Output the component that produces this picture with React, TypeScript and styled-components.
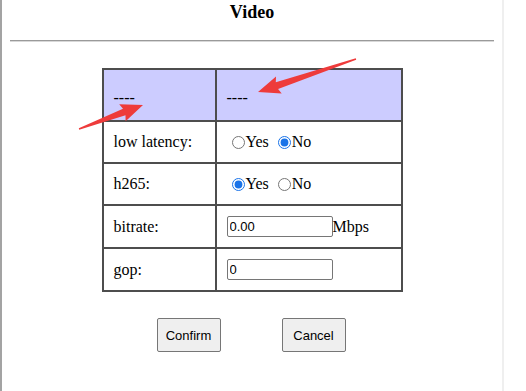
import React from "react";
import styled, { createGlobalStyle } from "styled-components";

const Global = createGlobalStyle`
  html, body { margin: 0; padding: 0; background: #fff; }
  body { font-family: "Liberation Serif", "Times New Roman", serif; color: #000; }
`;

const Page = styled.div`
  position: relative;
  box-sizing: border-box;
  width: 504px;
  height: 391px;
  border-left: 2px solid #a3a3a3;
  border-right: 2px solid #efefef;
  padding: 0 8px;
  display: flex;
  flex-direction: column;
  align-items: stretch;
`;

const Title = styled.h3`
  margin: 2px 0 0;
  font-size: 18px;
  line-height: 20px;
  font-weight: bold;
  text-align: center;
`;

const Rule = styled.hr`
  margin: 18px 0 0;
  border: none;
  border-top: 1px solid #9a9a9a;
  border-bottom: 1px solid #d8d8d8;
  height: 0;
`;

const Table = styled.table`
  margin: 26px auto 0;
  border-collapse: collapse;
  border: 2px solid #4d4d4d;
  font-size: 16px;
`;

const Row = styled.tr<{ $head?: boolean; $h: number }>`
  height: ${(p) => p.$h}px;
  background: ${(p) => (p.$head ? "#ccccff" : "#fff")};
`;

const Cell = styled.td<{ $w: number; $head?: boolean }>`
  width: ${(p) => p.$w}px;
  box-sizing: border-box;
  border: 2px solid #4d4d4d;
  padding: ${(p) => (p.$head ? "6px 10px 0" : "0 10px")};
  vertical-align: middle;
  white-space: nowrap;
`;

const Radio = styled.input.attrs({ type: "radio" })`
  margin: 0 1px 0 5px;
  width: 13px;
  height: 13px;
  vertical-align: -2px;
  accent-color: #1a73e8;
`;

const Field = styled.input`
  box-sizing: border-box;
  width: 106px;
  height: 21px;
  margin: 0;
  padding: 1px 2px;
  border: 1px solid #767676;
  border-radius: 2px;
  font-family: "Liberation Sans", Arial, sans-serif;
  font-size: 13px;
  vertical-align: middle;
`;

const Unit = styled.span`
  vertical-align: middle;
`;

const Buttons = styled.div`
  display: flex;
  justify-content: center;
  gap: 61px;
  margin-top: 26px;
  padding-right: 2px;
`;

const Button = styled.button`
  width: 64px;
  height: 34px;
  background: #efefef;
  border: 1px solid #767676;
  border-radius: 2px;
  font-family: "Liberation Sans", Arial, sans-serif;
  font-size: 13px;
  color: #000;
  padding: 0;
`;

const Overlay = styled.svg`
  position: absolute;
  left: -2px;
  top: 0;
  pointer-events: none;
`;

function Arrow({ x1, y1, x2, y2 }: { x1: number; y1: number; x2: number; y2: number }) {
  const dx = x2 - x1;
  const dy = y2 - y1;
  const len = Math.hypot(dx, dy);
  const ux = dx / len;
  const uy = dy / len;
  const nx = -uy;
  const ny = ux;
  const headLen = 20;
  const headW = 9;
  const neck = 3.5;
  const bx = x2 - ux * headLen;
  const by = y2 - uy * headLen;
  const pts = [
    [x1 + nx * 0.7, y1 + ny * 0.7],
    [bx + nx * neck, by + ny * neck],
    [bx + nx * headW - ux * 2, by + ny * headW - uy * 2],
    [x2, y2],
    [bx - nx * headW - ux * 2, by - ny * headW - uy * 2],
    [bx - nx * neck, by - ny * neck],
    [x1 - nx * 0.7, y1 - ny * 0.7],
  ]
    .map((p) => p.map((v) => v.toFixed(1)).join(","))
    .join(" ");
  return <polygon points={pts} fill="#ee3b3b" />;
}

export default function App() {
  return (
    <>
      <Global />
      <Page>
        <Title>Video</Title>
        <Rule />
        <Table>
          <tbody>
            <Row $head $h={52}>
              <Cell $w={113} $head>----</Cell>
              <Cell $w={186} $head>----</Cell>
            </Row>
            <Row $h={42}>
              <Cell $w={113}>low latency:</Cell>
              <Cell $w={186}>
                <Radio name="lat" />Yes{" "}
                <Radio name="lat" defaultChecked />No
              </Cell>
            </Row>
            <Row $h={42}>
              <Cell $w={113}>h265:</Cell>
              <Cell $w={186}>
                <Radio name="h265" defaultChecked />Yes{" "}
                <Radio name="h265" />No
              </Cell>
            </Row>
            <Row $h={43}>
              <Cell $w={113}>bitrate:</Cell>
              <Cell $w={186}>
                <Field defaultValue="0.00" />
                <Unit>Mbps</Unit>
              </Cell>
            </Row>
            <Row $h={43}>
              <Cell $w={113}>gop:</Cell>
              <Cell $w={186}>
                <Field defaultValue="0" />
              </Cell>
            </Row>
          </tbody>
        </Table>
        <Buttons>
          <Button>Confirm</Button>
          <Button>Cancel</Button>
        </Buttons>
        <Overlay width="526" height="391" viewBox="0 0 526 391">
          <Arrow x1={79} y1={129} x2={143} y2={105} />
          <Arrow x1={356} y1={59} x2={258} y2={92} />
        </Overlay>
      </Page>
    </>
  );
}
